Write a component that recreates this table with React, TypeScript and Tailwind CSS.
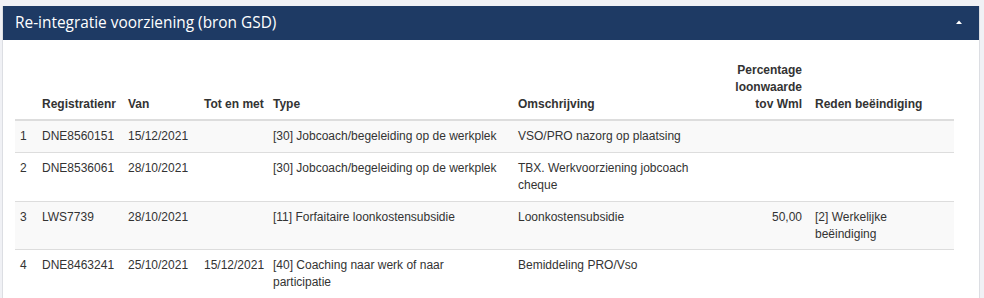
import React from "react";

interface Row {
    nr: string;
    registratienr: string;
    van: string;
    totEnMet: string;
    type: string;
    omschrijving: string;
    percentage: string;
    reden: string;
}

const rows: Row[] = [
    {
        nr: "1",
        registratienr: "DNE8560151",
        van: "15/12/2021",
        totEnMet: "",
        type: "[30] Jobcoach/begeleiding op de werkplek",
        omschrijving: "VSO/PRO nazorg op plaatsing",
        percentage: "",
        reden: "",
    },
    {
        nr: "2",
        registratienr: "DNE8536061",
        van: "28/10/2021",
        totEnMet: "",
        type: "[30] Jobcoach/begeleiding op de werkplek",
        omschrijving: "TBX. Werkvoorziening jobcoach cheque",
        percentage: "",
        reden: "",
    },
    {
        nr: "3",
        registratienr: "LWS7739",
        van: "28/10/2021",
        totEnMet: "",
        type: "[11] Forfaitaire loonkostensubsidie",
        omschrijving: "Loonkostensubsidie",
        percentage: "50,00",
        reden: "[2] Werkelijke beëindiging",
    },
    {
        nr: "4",
        registratienr: "DNE8463241",
        van: "25/10/2021",
        totEnMet: "15/12/2021",
        type: "[40] Coaching naar werk of naar participatie",
        omschrijving: "Bemiddeling PRO/Vso",
        percentage: "",
        reden: "",
    },
];

const th = "px-[5px] pt-[7px] pb-[6px] text-left align-bottom font-bold";
const td = "px-[5px] py-[7px] align-top";

export default function App() {
    return (
        <div className="h-[298px] overflow-hidden bg-[#f0f1f5] pt-[6px] pl-[2px] pr-[4px]">
            <div className="border border-t-0 border-[#dcdee3] bg-white">
                {/* panel heading */}
                <div className="flex h-[34px] items-center justify-between bg-[#1e3a64] pl-[12px] pr-[17px] text-white">
                    <h3 className="font-['Open_Sans',sans-serif] text-[15.4px] leading-none">
                        Re-integratie voorziening (bron GSD)
                    </h3>
                    <svg width="6" height="4" viewBox="0 0 6 4" aria-hidden="true" className="mb-[2px]">
                        <path d="M0 4 L3 0.5 L6 4 Z" fill="#ffffff" />
                    </svg>
                </div>

                <div className="pl-[12px] pt-[15px] pb-[24px]">
                    <table className="w-[939px] table-fixed border-collapse font-['Liberation_Sans',Arial,sans-serif] text-[12px] leading-[17px] text-[#333333]">
                        <colgroup>
                            <col className="w-[22px]" />
                            <col className="w-[86px]" />
                            <col className="w-[76px]" />
                            <col className="w-[69px]" />
                            <col className="w-[245px]" />
                            <col className="w-[217px]" />
                            <col className="w-[80px]" />
                            <col className="w-[144px]" />
                        </colgroup>
                        <thead>
                            <tr className="border-b-2 border-[#dddddd]">
                                <th className={th}></th>
                                <th className={th}>Registratienr</th>
                                <th className={th}>Van</th>
                                <th className={th + " whitespace-nowrap"}>Tot en met</th>
                                <th className={th}>Type</th>
                                <th className={th}>Omschrijving</th>
                                <th className={th + " !pr-[8px] !text-right"}>Percentage loonwaarde tov Wml</th>
                                <th className={th}>Reden beëindiging</th>
                            </tr>
                        </thead>
                        <tbody>
                            {rows.map((r, i) => (
                                <tr
                                    key={r.nr}
                                    className={
                                        "border-b border-[#dddddd] " +
                                        (i % 2 === 0 ? "bg-[#f9f9f9]" : "bg-white")
                                    }
                                >
                                    <td className={td}>{r.nr}</td>
                                    <td className={td}>{r.registratienr}</td>
                                    <td className={td}>{r.van}</td>
                                    <td className={td}>{r.totEnMet}</td>
                                    <td className={td + " !pr-[12px]"}>{r.type}</td>
                                    <td className={td}>{r.omschrijving}</td>
                                    <td className={td + " !pr-[8px] text-right"}>{r.percentage}</td>
                                    <td className={td + " pb-[6px]"}>{r.reden}</td>
                                </tr>
                            ))}
                        </tbody>
                    </table>
                </div>
            </div>
        </div>
    );
}
